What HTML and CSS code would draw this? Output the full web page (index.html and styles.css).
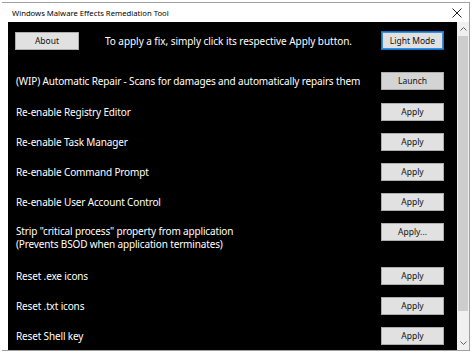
FILE: index.html
```html
<!DOCTYPE html>
<html>
<head>
<meta charset="utf-8">
<link rel="stylesheet" href="styles.css">
</head>
<body>
<div class="window">
  <div class="titlebar">
    <span class="title">Windows Malware Effects Remediation Tool</span>
    <span class="close">
      <svg width="10" height="10" viewBox="0 0 10 10"><path d="M0.5 0.5 L9.5 9.5 M9.5 0.5 L0.5 9.5" stroke="#222" stroke-width="1" fill="none"/></svg>
    </span>
  </div>
  <div class="client">
    <div class="content">
      <div class="header">
        <button class="btn about">About</button>
        <span class="intro">To apply a fix, simply click its respective Apply button.</span>
        <button class="btn mode">Light Mode</button>
      </div>
      <div class="row first">
        <span class="label">(WIP) Automatic Repair - Scans for damages and automatically repairs them</span>
        <button class="btn launch">Launch</button>
      </div>
      <div class="row second">
        <span class="label">Re-enable Registry Editor</span>
        <button class="btn">Apply</button>
      </div>
      <div class="row">
        <span class="label">Re-enable Task Manager</span>
        <button class="btn">Apply</button>
      </div>
      <div class="row">
        <span class="label">Re-enable Command Prompt</span>
        <button class="btn">Apply</button>
      </div>
      <div class="row">
        <span class="label">Re-enable User Account Control</span>
        <button class="btn">Apply</button>
      </div>
      <div class="row multi">
        <span class="label">Strip "critical process" property from application<br>(Prevents BSOD when application terminates)</span>
        <button class="btn">Apply...</button>
      </div>
      <div class="row after-multi">
        <span class="label">Reset .exe icons</span>
        <button class="btn">Apply</button>
      </div>
      <div class="row">
        <span class="label">Reset .txt icons</span>
        <button class="btn">Apply</button>
      </div>
      <div class="row">
        <span class="label">Reset Shell key</span>
        <button class="btn">Apply</button>
      </div>
    </div>
    <div class="scrollbar">
      <div class="arrow up">
        <svg width="7" height="4" viewBox="0 0 7 4"><path d="M0.5 3.5 L3.5 0.5 L6.5 3.5" stroke="#606060" stroke-width="1" fill="none"/></svg>
      </div>
      <div class="track">
        <div class="thumb"></div>
      </div>
      <div class="arrow down">
        <svg width="7" height="4" viewBox="0 0 7 4"><path d="M0.5 0.5 L3.5 3.5 L6.5 0.5" stroke="#606060" stroke-width="1" fill="none"/></svg>
      </div>
    </div>
  </div>
</div>
</body>
</html>
```
FILE: styles.css
```css
html, body {
  margin: 0;
  padding: 0;
  background: #ffffff;
}
body {
  width: 475px;
  height: 361px;
  overflow: hidden;
  font-family: "Noto Sans", "Open Sans", sans-serif;
}
.window {
  margin: 2px 5px 0 2px;
  border-top: 1px solid #a0a0a0;
  border-right: 1px solid #a0a0a0;
  border-bottom: 1px solid #a0a0a0;
  width: 467px;
}
.titlebar {
  height: 19px;
  display: flex;
  align-items: center;
  justify-content: space-between;
  padding: 0 7px 0 10px;
  background: #ffffff;
}
.title {
  font-size: 7.7px;
  color: #000;
}
.close {
  display: flex;
  align-items: center;
  margin-top: 1px;
}
.client {
  display: flex;
  margin-left: 6px;
  height: 328px;
}
.content {
  flex: 1;
  min-width: 0;
  background: #000000;
  padding: 9px 13px 0 7px;
  color: #ffffff;
}
.header {
  display: flex;
  align-items: center;
  height: 19px;
}
.intro {
  flex: 1;
  min-width: 0;
  font-size: 10px;
  letter-spacing: -0.05px;
  margin-left: 26px;
  white-space: nowrap;
}
.btn {
  font-family: "Noto Sans", "Open Sans", sans-serif;
  font-size: 8.5px;
  color: #111;
  background: #e1e1e1;
  border: 1px solid #adadad;
  width: 63px;
  height: 18px;
  padding: 0;
  margin: 0;
  flex: none;
  line-height: 16px;
}
.about {
  width: 64px;
}
.mode {
  height: 19px;
  border: 1px solid #0078d7;
  box-shadow: inset 0 0 0 1px #3d8fd8;
}
.launch {
  background: #d4d4d4;
}
.row {
  display: flex;
  align-items: center;
  margin-top: 12px;
  height: 18px;
}
.row.first {
  margin-top: 22px;
}
.row.second {
  margin-top: 13px;
}
.row.multi {
  align-items: flex-start;
  height: 30px;
}
.row.multi .label {
  line-height: 13px;
  padding-top: 2px;
}
.row.after-multi {
  margin-top: 14px;
}
.label {
  flex: 1;
  min-width: 0;
  font-size: 10px;
  letter-spacing: -0.15px;
  line-height: 15px;
  padding-left: 1px;
  white-space: nowrap;
}
.scrollbar {
  width: 12px;
  background: #f0f0f0;
  display: flex;
  flex-direction: column;
}
.arrow {
  height: 14px;
  display: flex;
  align-items: center;
  justify-content: center;
}
.track {
  flex: 1;
  display: flex;
  flex-direction: column;
}
.thumb {
  margin: 0 1px;
  height: 275px;
  background: #cdcdcd;
}
```
